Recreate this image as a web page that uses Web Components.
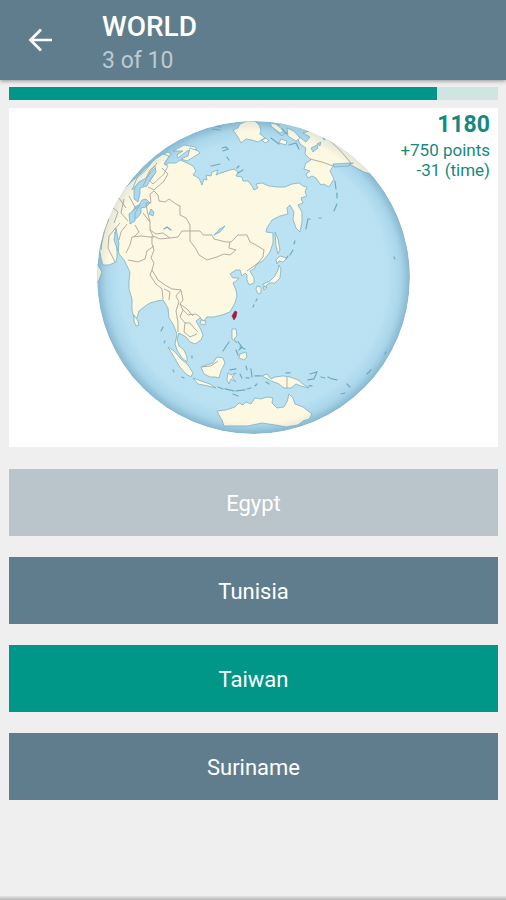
<!DOCTYPE html>
<html lang="en">
<head>
<meta charset="utf-8">
<meta name="viewport" content="width=device-width, initial-scale=1">
<title>World quiz</title>
<style>
  body {
    margin: 0;
    background: #efefef;
    font-family: Roboto, "Liberation Sans", sans-serif;
    --slate: #607d8d;
    --slate-off: #b9c5ca;
    --teal: #009688;
  }
</style>
</head>
<body>
<quiz-screen>
  <app-bar slot="bar" heading="WORLD" sub="3 of 10"></app-bar>
  <time-bar value="876" max="1000"></time-bar>
  <question-card score="1180" points="+750 points" penalty="-31 (time)">
    <world-globe></world-globe>
  </question-card>
  <answer-list>
    <answer-button state="off">Egypt</answer-button>
    <answer-button>Tunisia</answer-button>
    <answer-button state="right">Taiwan</answer-button>
    <answer-button>Suriname</answer-button>
  </answer-list>
</quiz-screen>

<script>
class QuizScreen extends HTMLElement {
  connectedCallback() {
    this.attachShadow({ mode: "open" }).innerHTML = `
      <style>
        :host {
          display: flex;
          flex-direction: column;
          min-height: 100vh;
        }
        main {
          flex: 1;
          display: flex;
          flex-direction: column;
          gap: 8px;
          padding: 7px 8px 16px 9px;
        }
        .edge {
          height: 4px;
          background: linear-gradient(#e6e6e6, #b4b4b4);
        }
      </style>
      <slot name="bar"></slot>
      <main><slot></slot></main>
      <div class="edge" aria-hidden="true"></div>
    `;
  }
}

class AppBar extends HTMLElement {
  connectedCallback() {
    this.attachShadow({ mode: "open" }).innerHTML = `
      <style>
        :host {
          display: block;
        }
        header {
          display: flex;
          align-items: center;
          gap: 48px;
          height: 80px;
          padding-left: 26px;
          background: var(--slate);
          color: #fff;
          box-shadow: 0 1px 4px rgba(0, 0, 0, 0.4);
        }
        button {
          border: 0;
          padding: 0;
          background: none;
          color: inherit;
          line-height: 0;
        }
        .titles {
          padding-top: 8px;
        }
        h1 {
          margin: 0;
          font-size: 28px;
          font-weight: 500;
          line-height: 34px;
        }
        p {
          margin: 0;
          font-size: 23px;
          line-height: 34px;
          color: #bccad2;
        }
      </style>
      <header>
        <button type="button" aria-label="Back">
          <svg width="28" height="28" viewBox="0 0 28 28" fill="none" stroke="currentColor" stroke-width="2.7">
            <path d="M26 14H4.500M15 3.500L4.500 14L15 24.500"/>
          </svg>
        </button>
        <div class="titles">
          <h1>${this.getAttribute("heading")}</h1>
          <p>${this.getAttribute("sub")}</p>
        </div>
      </header>
    `;
  }
}

class TimeBar extends HTMLElement {
  connectedCallback() {
    this.attachShadow({ mode: "open" }).innerHTML = `
      <style>
        :host {
          display: block;
        }
        progress {
          display: block;
          appearance: none;
          -webkit-appearance: none;
          width: 100%;
          height: 13px;
          border: 0;
          background: #d0e5e1;
        }
        progress::-webkit-progress-bar {
          background: #d0e5e1;
        }
        progress::-webkit-progress-value {
          background: var(--teal);
        }
      </style>
      <progress aria-label="Time left" value="${this.getAttribute("value")}" max="${this.getAttribute("max")}"></progress>
    `;
  }
}

class QuestionCard extends HTMLElement {
  connectedCallback() {
    this.attachShadow({ mode: "open" }).innerHTML = `
      <style>
        :host {
          display: block;
          position: relative;
          background: #fff;
          padding: 13px 0;
        }
        /* the score floats over the corner of the map */
        .score {
          position: absolute;
          top: 2px;
          right: 8px;
          text-align: right;
          color: #17897c;
        }
        p {
          margin: 0;
          font-size: 17px;
          line-height: 20px;
        }
        .total {
          font-size: 23px;
          font-weight: 700;
          line-height: 30px;
        }
      </style>
      <slot></slot>
      <div class="score">
        <p class="total">${this.getAttribute("score")}</p>
        <p>${this.getAttribute("points")}</p>
        <p>${this.getAttribute("penalty")}</p>
      </div>
    `;
  }
}

class WorldGlobe extends HTMLElement {
  connectedCallback() {
    this.attachShadow({ mode: "open" }).innerHTML = `
      <style>
        :host {
          display: block;
        }
        svg {
          display: block;
          width: 64%;
          margin: 0 auto;
        }
        .land {
          fill: #fdf8e2;
          stroke: #7fb0c2;
          stroke-width: 0.8;
          stroke-linejoin: round;
        }
        .water {
          fill: #acd8ec;
          stroke: #6fabc4;
          stroke-width: 0.7;
        }
        .border {
          fill: none;
          stroke: #aaa49b;
          stroke-width: 0.9;
          stroke-linejoin: round;
        }
        .isles {
          fill: none;
          stroke: #6fa9bd;
          stroke-width: 1.2;
          stroke-linecap: round;
        }
      </style>
      <svg viewBox="97 121 313 313" role="img" aria-label="Globe centred on East Asia">
        <defs>
          <radialGradient id="sea">
            <stop offset="0" stop-color="#bce3f3"/>
            <stop offset="0.86" stop-color="#b9e1f2"/>
            <stop offset="0.95" stop-color="#a9d5ea"/>
            <stop offset="1" stop-color="#8fc0d8"/>
          </radialGradient>
          <radialGradient id="shade">
            <stop offset="0.93" stop-color="#5d8ba0" stop-opacity="0"/>
            <stop offset="1" stop-color="#5d8ba0" stop-opacity="0.16"/>
          </radialGradient>
          <clipPath id="disc"><circle cx="253.500" cy="277.500" r="156.500"/></clipPath>
        </defs>
        <g clip-path="url(#disc)">
          <circle cx="253.500" cy="277.500" r="156.500" fill="url(#sea)"/>

          <!-- Eurasia -->
          <path class="land" d="M90 268L99 226L112 206L120 193L130 183L140 174L150 164L160 156L168 152L171 154L167 160L164 166L169 163L176 163L180 160L187 163L193 166L196 171L193 175L199 178L202 185L204 179L207 180L206 175L211 176L212 172L218 170L216 175L221 173L227 171L234 169L238 172L236 176L242 177L243 181L248 181L252 186L254 190L258 188L256 184L262 183L269 186L277 187L285 187L292 184L299 183L303 186L307 187L305 192L307 196L301 198L303 203L298 205L302 212L302 222L300 232L296 228L293 219L294 212L290 205L287 208L288 214L280 216L272 220L267 228L266 232L273 233L273 243L270 252L263 261L257 264L254 269L250 271L254 278L254 283L249 285L247 280L247 275L245 273L242 276L240 270L236 270L230 274L233 278L239 278L236 281L233 283L236 290L237 296L235 303L230 312L222 315L214 317L207 317L204 321L200 318L196 321L200 328L203 335L201 340L195 344L190 342L186 337L179 333L177 339L179 346L184 350L187 357L187 362L182 358L177 350L175 344L177 334L173 324L169 318L168 308L163 300L157 301L150 303L144 307L139 311L137 318L134 318L132 310L132 299L129 289L129 282L130 272L127 266L124 260L119 254L117 244L115 232L117 250L117 257L116 262L109 265L103 265L101 258L99 246L98 254L96 262L102 272L99 280L90 292Z"/>
          <path class="water" d="M163 160L155 168L147 177L143 176L137 182L134 190L134 199L138 202L140 194L140 188L147 186L151 178L158 171L165 166Z"/>
          <path class="water" d="M146 199L150 203L146 207L141 208L141 213L137 218L131 221L130 216L135 207L140 204L142 200Z"/>
          <path class="water" d="M151 209L154 212L153 216L149 214Z"/>
          <path class="water" d="M140 205L129 214L130 224L135 221L135 213Z"/>
          <path class="water" d="M100 234L103 223L112 207L105 225L102 240L101 250Z"/>
          <path class="water" d="M116 228L114 240L118 251L119 244Z"/>
          <path class="water" d="M225 226L220 232L214 235L220 229Z"/>
          <path class="isles" d="M164 229l3-2 4 3"/>
          <path class="land" d="M163 154L154 160L145 171L137 178L132 190L139 182L146 178L150 170L155 166L156 172L150 181L153 184L164 174L168 166L164 164L169 156Z"/>

          <!-- Arctic islands, Greenland and North America -->
          <path class="land" d="M173 151L184 145L195 147L197 149L187 151L178 158L177 155L183 151Z"/>
          <path class="land" d="M190 148L198 151L200 153L192 158L187 161L181 159L188 156Z"/>
          <path class="land" d="M233 130L238 128L240 124L247 121L255 121L259 125L261 130L260 134L265 138L258 142L252 140L246 139L241 143L238 137Z"/>
          <path class="land" d="M289 122L302 125L330 138L354 153L374 175L364 172L351 165L334 165L330 171L334 179L329 187L324 184L321 185L316 178L312 176L308 178L306 174L310 171L304 169L306 163L311 160L305 154L306 148L300 144L297 137L292 134Z"/>
          <path class="water" d="M284 121L294 124L309 131L303 133L310 137L306 142L298 136L292 137L286 132L282 136L274 129Z"/>
          <path class="land" d="M270 123L276 124L284 131L280 133L272 127ZM287 128L294 131L300 138L296 141L288 136ZM281 139l6 2-1 4-7-2ZM262 140l4-2 3 3-4 2Z"/>
          <path class="water" d="M311 148l6-3 1 3-5 4ZM317 144l4-2-1 4ZM323 137l4 1-3 2ZM333 164l17-1-1 3-15 1Z"/>
          <path class="isles" d="M222 148l4-1 2 2-5 2M227 157l2 3M237 168l2-2M238 173l5-3M211 166l9-2M212 129l8 1M216 126l5 1M271 138l8 6M282 129l5 5M289 145l7-2 3 6M350 164l3-1"/>
          <path class="isles" d="M335 181l1 8M337 193v5M337 204l-3 7M309 219h1M319 218h2M308 219l-2 10"/>

          <!-- Sakhalin, Kurils, Japan -->
          <path class="land" d="M275 232L278 239L280 250L278 254L276 246Z"/>
          <path class="land" d="M280 256L287 258L283 262L279 261L277 264L276 260Z"/>
          <path class="land" d="M279 265L281 269L280 278L275 283L269 283L265 287L263 284L270 281L275 276L278 270ZM257 286l4 1 0 6-3 1-2-5ZM263 287l4 0-3 3Z"/>
          <path class="isles" d="M286 259l2-3M290 255l3-5M253 307l1-2M256 301l1-2M294 244l1-3"/>

          <!-- South-east Asia -->
          <path class="land" d="M134 315L138 321L139 325L136 326L134 321Z"/>
          <path class="land" d="M201 320l5 1-1 4-5-1Z"/>
          <path class="land" d="M168 347L174 351L181 359L188 365L193 373L191 377L186 374L179 366L174 357Z"/>
          <path class="land" d="M193 378L201 381L210 384L216 388L208 386L198 384Z"/>
          <path class="land" d="M201 367L207 365L213 363L217 357L223 358L225 363L221 371L219 378L215 377L210 377L204 374Z"/>
          <path class="land" d="M232 329l4 0 1 7-3 3 3 4-5-4ZM240 354l6-2 1 5-3 3-5-2Z"/>
          <path class="land" d="M228 373l3 2 5-2-4 4 4 5-5-3-2 5-2-4Z"/>
          <path class="land" d="M262 376L267 374L271 379L275 377L283 376L290 377L298 380L303 384L309 388L301 386L296 384L291 388L284 388L279 384L274 382L271 381Z"/>
          <path class="isles" d="M229 342l-6 9M238 342l4 5-3 3M240 347l5 2M236 350l2 5M230 370l6-1M251 369l1 8M255 376h6M240 374l2 4M246 378l3 0M218 387l5 2M225 389l9 2M236 391l9-1M247 389l4-1M233 394l5 2M255 386l2-2M246 366l1 4M163 327l-2 4M165 341l-1 2M173 370l1 2M182 377l2 1M192 356v2M266 382l3 2M286 373h4M310 374l7-2-3 7-6 1M321 377l4 1M328 377l4 2 5 1M309 386h3M341 394l4-1M347 384l3 3M367 374l4-4M385 354l1-2M394 257l1 2"/>

          <!-- Australia -->
          <path class="land" d="M217 411L226 410L235 407L239 403L243 405L246 402L251 404L255 398L261 399L267 397L273 398L272 403L277 408L284 407L287 402L289 394L293 398L295 404L303 407L312 414L309 419L303 421L298 425L286 427L275 425L262 423L248 426L237 426L224 426L222 420L219 415Z"/>

          <path class="border" d="M150 222L147 210L146 203L151 203L150 194L154 191L158 195L159 201L165 202L169 199L176 204L180 206L180 215L186 218L190 225L190 231L182 231L178 237L170 238L163 233L156 234L150 230ZM190 231L200 231L203 235L212 235L214 239L226 242L231 242L238 235L247 235L250 242L256 245L264 250L263 257L258 263L254 266L247 271M190 231L190 241L196 249L199 255L207 260L217 257L224 254L230 255L236 250L229 248L230 242"/>
          <path class="border" d="M150 230L153 236L160 239L170 238M152 236L152 244L154 250L151 258L154 263L152 270L158 280L165 285L172 289L181 290L183 300L180 304L183 310L188 315L196 314L201 318M128 260L138 262L145 259L147 251L154 246M126 253L130 245L132 237L141 236L149 237L154 237M134 237L139 232L135 225M127 224L121 232L119 240M120 223L109 236L108 248L115 262M109 219L105 229L101 246M152 270L150 275L156 284L162 289M162 289L163 299M164 289L170 292L169 300M181 290L176 296L179 302L176 311L178 322L178 332M180 304L187 309L193 316M183 310L180 317L185 323L190 323L195 329L198 332M185 323L184 332L190 337L197 334M202 367L211 366L218 361M287 377L287 388"/>
          <path class="border" d="M310 159L322 162L333 166M310 126Q334 141 351 163M157 163L150 172L143 186M148 187L154 190L164 181L168 174L162 168M129 196L136 209M124 199L121 213L128 221M112 207L118 212L114 223M119 198L126 208M143 213L150 222"/>

          <!-- Taiwan, the country asked for -->
          <path d="M235 311L237 312L236 317L234 320L232 316Z" fill="#b5123b" stroke="#8b2444" stroke-width="0.6"/>
          <circle cx="253.500" cy="277.500" r="156.500" fill="url(#shade)"/>
        </g>
      </svg>
    `;
  }
}

class AnswerList extends HTMLElement {
  connectedCallback() {
    this.attachShadow({ mode: "open" }).innerHTML = `
      <style>
        :host {
          display: flex;
          flex-direction: column;
          gap: 21px;
          padding-top: 14px;
        }
      </style>
      <slot></slot>
    `;
  }
}

class AnswerButton extends HTMLElement {
  connectedCallback() {
    this.attachShadow({ mode: "open" }).innerHTML = `
      <style>
        :host {
          display: block;
        }
        button {
          display: block;
          width: 100%;
          border: 0;
          padding: 21px 16px 19px;
          background: var(--slate);
          color: #fff;
          font: inherit;
          font-size: 22px;
          line-height: 27px;
        }
        :host([state="off"]) button {
          background: var(--slate-off);
        }
        :host([state="right"]) button {
          background: var(--teal);
        }
      </style>
      <button type="button"><slot></slot></button>
    `;
  }
}

customElements.define("quiz-screen", QuizScreen);
customElements.define("app-bar", AppBar);
customElements.define("time-bar", TimeBar);
customElements.define("question-card", QuestionCard);
customElements.define("world-globe", WorldGlobe);
customElements.define("answer-list", AnswerList);
customElements.define("answer-button", AnswerButton);
</script>
</body>
</html>
